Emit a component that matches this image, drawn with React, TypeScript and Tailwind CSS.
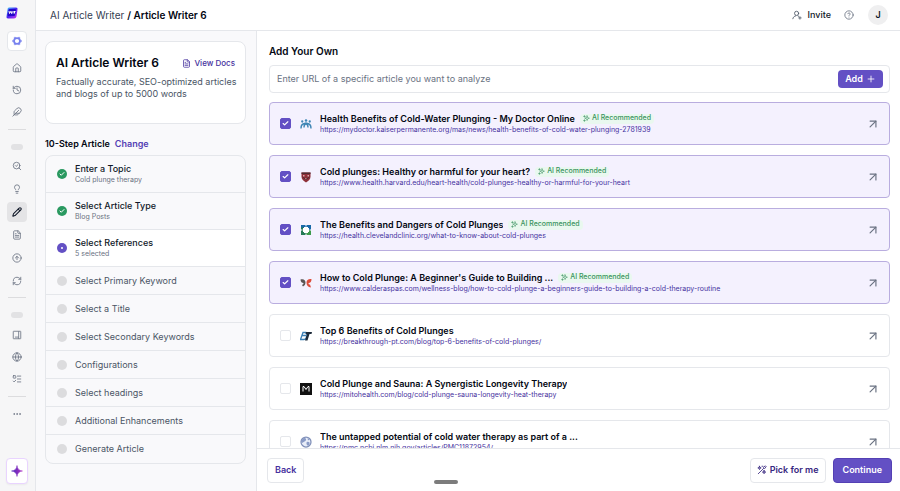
import React, { useState } from "react";
import {
  ArrowUpRight,
  Check,
  CircleHelp,
  Feather,
  FileText,
  Globe,
  History,
  House,
  Lightbulb,
  ListTodo,
  Ellipsis,
  Pencil,
  Plus,
  RefreshCw,
  CircleArrowUp,
  SearchCheck,
} from "lucide-react";
import clsx from "clsx";

interface Step {
  label: string;
  detail?: string;
  status: "done" | "active" | "todo";
}

const steps: Step[] = [
  { label: "Enter a Topic", detail: "Cold plunge therapy", status: "done" },
  { label: "Select Article Type", detail: "Blog Posts", status: "done" },
  { label: "Select References", detail: "5 selected", status: "active" },
  { label: "Select Primary Keyword", status: "todo" },
  { label: "Select a Title", status: "todo" },
  { label: "Select Secondary Keywords", status: "todo" },
  { label: "Configurations", status: "todo" },
  { label: "Select headings", status: "todo" },
  { label: "Additional Enhancements", status: "todo" },
  { label: "Generate Article", status: "todo" },
];

interface Reference {
  id: number;
  title: string;
  url: string;
  icon: string;
  recommended: boolean;
}

const references: Reference[] = [
  {
    id: 1,
    title: "Health Benefits of Cold-Water Plunging - My Doctor Online",
    url: "https://mydoctor.kaiserpermanente.org/mas/news/health-benefits-of-cold-water-plunging-2781939",
    icon: "kaiser",
    recommended: true,
  },
  {
    id: 2,
    title: "Cold plunges: Healthy or harmful for your heart?",
    url: "https://www.health.harvard.edu/heart-health/cold-plunges-healthy-or-harmful-for-your-heart",
    icon: "harvard",
    recommended: true,
  },
  {
    id: 3,
    title: "The Benefits and Dangers of Cold Plunges",
    url: "https://health.clevelandclinic.org/what-to-know-about-cold-plunges",
    icon: "cleveland",
    recommended: true,
  },
  {
    id: 4,
    title: "How to Cold Plunge: A Beginner's Guide to Building ...",
    url: "https://www.calderaspas.com/wellness-blog/how-to-cold-plunge-a-beginners-guide-to-building-a-cold-therapy-routine",
    icon: "caldera",
    recommended: true,
  },
  {
    id: 5,
    title: "Top 6 Benefits of Cold Plunges",
    url: "https://breakthrough-pt.com/blog/top-6-benefits-of-cold-plunges/",
    icon: "breakthrough",
    recommended: false,
  },
  {
    id: 6,
    title: "Cold Plunge and Sauna: A Synergistic Longevity Therapy",
    url: "https://mitohealth.com/blog/cold-plunge-sauna-longevity-heat-therapy",
    icon: "mito",
    recommended: false,
  },
  {
    id: 7,
    title: "The untapped potential of cold water therapy as part of a ...",
    url: "https://pmc.ncbi.nlm.nih.gov/articles/PMC11872954/",
    icon: "ncbi",
    recommended: false,
  },
];

const SiteIcon = ({ name }: { name: string }) => {
  switch (name) {
    case "kaiser":
      return (
        <svg viewBox="0 0 24 24" className="size-3">
          <g fill="#3f86b5">
            <circle cx="4.5" cy="7" r="2.3" />
            <circle cx="12" cy="5" r="2.5" />
            <circle cx="19.5" cy="7" r="2.3" />
          </g>
          <path d="M2 21c0-5 1-8 4-9l6-2 6 2c3 1 4 4 4 9M8 19c0-4 1-7 4-7s4 3 4 7" fill="none" stroke="#3f86b5" strokeWidth="2.8" />
        </svg>
      );
    case "harvard":
      return (
        <svg viewBox="0 0 24 24" className="size-3">
          <path d="M3 3h18v8c0 6-4 9-9 12-5-3-9-6-9-12z" fill="#8e2f38" />
          <path d="M3 3h18v3H3z" fill="#4f2b30" />
          <path d="M6 8h3v3H6zM15 8h3v3h-3zM10 14h3v3h-3z" fill="#d9a9aa" />
          <path d="m5 12 7 5 7-5" fill="none" stroke="#4f2b30" strokeWidth="2" />
        </svg>
      );
    case "cleveland":
      return (
        <svg viewBox="0 0 24 24" className="size-3">
          <path d="M2 2h10v20H2z" fill="#257b56" />
          <path d="M12 2h10v10H12z" fill="#1768a8" />
          <path d="M2 2h10v5H2z" fill="#1768a8" />
          <path d="M12 12h10v10H12z" fill="#3c9a4b" />
          <path d="M8 6h8v2h2v8h-2v2H8v-2H6V8h2z" fill="#fff" />
          <path d="M11 2h2v3h-2zM11 19h2v3h-2zM2 11h3v2H2zM19 11h3v2h-3z" fill="#fff" />
        </svg>
      );
    case "caldera":
      return (
        <svg viewBox="0 0 24 24" className="size-3">
          <path d="M1 5c6-2 10 1 10 6 0 4-2 6-5 8l-2-3c2-1 3-2 3-4-3 0-6-2-6-7z" fill="#5b5554" />
          <path d="M23 4c-6-1-10 2-10 7 0 6 3 9 9 10l-2-6c-2 0-3-1-3-3 4 0 6-3 6-8z" fill="#dd4d3a" />
        </svg>
      );
    case "breakthrough":
      return (
        <svg viewBox="0 0 24 24" className="size-3">
          <path d="M6 5h6c3 0 2 6-1 6 4 0 2 8-3 8H1zM4 11h7" fill="none" stroke="#3a7fb5" strokeWidth="2.6" />
          <path d="M12 4h12l-1 4h-4l-4 13h-5l4-13h-3z" fill="#1d2b3a" />
        </svg>
      );
    case "mito":
      return (
        <svg viewBox="0 0 24 24" className="size-3">
          <path d="M0 0h24v24H0z" fill="#111" />
          <path d="M6 17V7h2l4 6 4-6h2v10" fill="none" stroke="#fff" strokeWidth="2" />
        </svg>
      );
    default:
      return (
        <svg viewBox="0 0 24 24" className="size-3">
          <circle cx="12" cy="12" r="10" fill="#e8edf8" stroke="#7f8fb8" strokeWidth="2.5" />
          <path d="M6 5c4-2 7 0 6 3s-5 3-6 5-4-1-4-3zM14 12c4-1 6 1 5 4s-4 4-5 2-2-5 0-6zM15 4l4 3-3 2z" fill="#8a9bc6" />
        </svg>
      );
  }
};

const WandIcon = ({ className }: { className?: string }) => (
  <svg viewBox="0 0 24 24" className={className} fill="none" stroke="currentColor" strokeWidth="2" strokeLinecap="round" strokeLinejoin="round">
    <path d="m3 21 13-13M6 3l1 3 3 1-3 1-1 3-1-3-3-1 3-1zM12 3h2" />
    <path d="m15 6 5-4 2 2-4 5M17 13l1 3 3 1-3 1-1 3-1-3-3-1 3-1z" />
  </svg>
);

const SparkIcon = ({ className }: { className?: string }) => (
  <svg viewBox="0 0 24 24" className={className} fill="none" stroke="currentColor" strokeWidth="2" strokeLinecap="round" strokeLinejoin="round">
    <path d="m14 3 2 6 6 2-6 2-2 6-2-6-6-2 6-2zM5 2v5M2 5h6M5 16v6M2 19h6" />
  </svg>
);

const InviteIcon = () => (
  <svg viewBox="0 0 24 24" className="size-[10px] text-gray-600" fill="none" stroke="currentColor" strokeWidth="2" strokeLinecap="round" strokeLinejoin="round">
    <circle cx="11" cy="8" r="5" />
    <path d="M2 21c1-4 3-6 7-7M14 14l2 1M19 16v6M16 19h6" />
  </svg>
);

const PanelIcon = () => (
  <svg viewBox="0 0 24 24" className="size-[10px]" fill="none" stroke="currentColor" strokeWidth="2" strokeLinejoin="round">
    <rect x="3" y="3" width="18" height="18" rx="1" />
    <path d="M16 3v18M7 17h9" />
  </svg>
);

const navIcon = "size-[10px]";

const createItems = [
  { label: "Home", icon: <House className={navIcon} /> },
  { label: "History", icon: <History className={navIcon} /> },
  { label: "Writing", icon: <Feather className={navIcon} /> },
];

const toolItems = [
  { label: "Research", icon: <SearchCheck className={navIcon} /> },
  { label: "Ideas", icon: <Lightbulb className={navIcon} /> },
  { label: "Article writer", icon: <Pencil className={navIcon} strokeWidth={2.5} />, active: true },
  { label: "Documents", icon: <FileText className={navIcon} /> },
  { label: "Publish", icon: <CircleArrowUp className={navIcon} /> },
  { label: "Refresh", icon: <RefreshCw className={navIcon} /> },
];

const siteItems = [
  { label: "Library", icon: <PanelIcon /> },
  { label: "Sites", icon: <Globe className={navIcon} /> },
  { label: "Tasks", icon: <ListTodo className={navIcon} /> },
];

const NavButton = ({ label, icon, active }: { label: string; icon: React.ReactNode; active?: boolean }) => (
  <button
    aria-label={label}
    className={clsx(
      "flex size-5 items-center justify-center rounded",
      active ? "bg-[#e4e4e6] text-gray-900" : "text-gray-500"
    )}
  >
    {icon}
  </button>
);

const Divider = () => <div className="h-px w-[18px] shrink-0 bg-[#dcdcde]" />;
const Pill = () => <div className="h-[6px] w-3 shrink-0 rounded-full bg-[#e2e2e4]" />;

const Sidebar = () => (
  <nav className="flex w-9 shrink-0 flex-col items-center border-r border-gray-200 bg-[#f6f6f7] pt-[7px] pr-[2px] pb-[7px]">
    <svg viewBox="0 0 24 24" className="mr-[9px] size-3 shrink-0">
      <defs>
        <linearGradient id="brand" x1="0" y1="0" x2="1" y2="1">
          <stop offset="0" stopColor="#3fc5ff" />
          <stop offset="0.5" stopColor="#4a20f0" />
          <stop offset="1" stopColor="#d03cf0" />
        </linearGradient>
      </defs>
      <path d="M6 1h14q4 0 3 4l-2 14q-1 4-5 4H4q-4 0-3-4L3 5q0-4 3-4z" fill="url(#brand)" />
      <path d="M7 4h11q2 0 2 2l-2 10q0 2-2 2H5q-2 0-2-2L5 6q0-2 2-2z" fill="#2308c8" />
      <path d="m6 8 1 5 2-4 2 4 1-5M14 9v4M17 8v5M15 9h4" fill="none" stroke="#fff" strokeWidth="2" />
    </svg>
    <button aria-label="Workspace" className="mt-3 flex size-5 shrink-0 items-center justify-center rounded border border-gray-200 bg-white">
      <svg viewBox="0 0 24 24" className="size-[10px]">
        <g fill="#a3a9f3">
          <circle cx="7" cy="5" r="3" />
          <circle cx="17" cy="5" r="3" />
          <circle cx="3" cy="12" r="3" />
          <circle cx="21" cy="12" r="3" />
          <circle cx="7" cy="19" r="3" />
          <circle cx="17" cy="19" r="3" />
        </g>
        <circle cx="12" cy="12" r="7" fill="none" stroke="#7680ee" strokeWidth="4" />
      </svg>
    </button>
    <div className="mt-[7px] flex flex-col gap-[2px]">
      {createItems.map((item) => (
        <NavButton key={item.label} {...item} />
      ))}
    </div>
    <div className="mt-[7px] mb-[14px]"><Divider /></div>
    <Pill />
    <div className="mt-[6px] flex flex-col gap-[3px]">
      {toolItems.map((item) => (
        <NavButton key={item.label} {...item} />
      ))}
    </div>
    <div className="mt-[6px] mb-[14px]"><Divider /></div>
    <Pill />
    <div className="mt-[7px] flex flex-col gap-[2px]">
      {siteItems.map((item) => (
        <NavButton key={item.label} {...item} />
      ))}
    </div>
    <div className="my-[7px]"><Divider /></div>
    <NavButton label="More" icon={<Ellipsis className="size-[10px]" />} />
    <button aria-label="Assistant" className="mt-auto flex h-[26px] w-[22px] shrink-0 items-center justify-center rounded border border-purple-200 bg-white shadow-xs">
      <svg viewBox="0 0 24 24" className="size-3">
        <defs>
          <linearGradient id="spark" x1="0" y1="0" x2="1" y2="0">
            <stop offset="0" stopColor="#4b25b8" />
            <stop offset="1" stopColor="#b035c4" />
          </linearGradient>
        </defs>
        <path d="M12 1q1 10 11 11-10 1-11 11Q11 13 1 12 11 11 12 1z" fill="url(#spark)" stroke="url(#spark)" strokeWidth="1" />
      </svg>
    </button>
  </nav>
);

const Header = () => (
  <header className="flex h-[31px] shrink-0 items-center justify-between border-b border-gray-200 bg-white pr-3 pl-[14px]">
    <div className="text-[10px] text-gray-700">
      AI Article Writer <span className="font-semibold text-gray-950">/ Article Writer 6</span>
    </div>
    <div className="flex items-center">
      <button className="flex items-center gap-[6px] text-[9px] font-medium text-gray-900">
        <InviteIcon />
        Invite
      </button>
      <button aria-label="Help" className="ml-[13px] text-gray-500">
        <CircleHelp className="size-[10px]" />
      </button>
      <button className="ml-[14px] flex size-5 items-center justify-center rounded-full bg-[#efeff0] text-[9px] font-semibold text-gray-900">
        J
      </button>
    </div>
  </header>
);

const StepMarker = ({ status }: { status: Step["status"] }) => (
  <span
    className={clsx(
      "flex size-[10px] shrink-0 items-center justify-center rounded-full",
      status === "done" && "bg-[#2a9960]",
      status === "active" && "bg-[#6350c4]",
      status === "todo" && "bg-[#dcdcde]"
    )}
  >
    {status === "done" && <Check className="size-[6px] text-white" strokeWidth={4} />}
    {status === "active" && <span className="size-[2px] rounded-full bg-white" />}
  </span>
);

const StepsPanel = () => (
  <aside className="w-[221px] shrink-0 overflow-hidden border-r border-gray-200 bg-[#f9f9fb] pt-[10px] pr-[10px] pl-[9px]">
    <div className="h-[83px] rounded-lg border border-gray-200 bg-white px-[10px] pt-3">
      <div className="flex items-center justify-between">
        <h1 className="text-[12px] leading-[18px] font-semibold text-gray-950">AI Article Writer 6</h1>
        <a href="#docs" className="flex items-center gap-[3px] text-[8px] font-medium text-[#46319e]">
          <FileText className="size-[9px]" />
          View Docs
        </a>
      </div>
      <p className="-mr-2 mt-1 text-[9px] leading-3 text-gray-600">
        Factually accurate, SEO-optimized articles and blogs of up to 5000 words
      </p>
    </div>
    <div className="mt-[13px] flex h-[14px] items-center gap-[5px] text-[9px] font-semibold">
      <h2 className="text-gray-950">10-Step Article</h2>
      <button className="text-[#5440b4]">Change</button>
    </div>
    <ol className="mt-1 overflow-hidden rounded-lg border border-gray-200">
      {steps.map((step) => (
        <li
          key={step.label}
          className={clsx(
            "flex items-center gap-2 border-b border-gray-200 px-[11px] last:border-b-0",
            step.detail ? "h-[37px]" : "h-7",
            step.status === "active" && "bg-white"
          )}
        >
          <StepMarker status={step.status} />
          <div>
            <div className={clsx("text-[9px] leading-3", step.status === "todo" ? "text-gray-600" : "font-medium text-gray-900")}>
              {step.label}
            </div>
            {step.detail && <div className="text-[7px] leading-[10px] text-gray-500">{step.detail}</div>}
          </div>
        </li>
      ))}
    </ol>
  </aside>
);

interface ReferenceCardProps {
  item: Reference;
  checked: boolean;
  onToggle: (id: number) => void;
}

const ReferenceCard = ({ item, checked, onToggle }: ReferenceCardProps) => (
  <li
    className={clsx(
      "flex h-[43px] shrink-0 items-center rounded border pr-[9px] pl-[10px]",
      checked ? "border-[#b9addf] bg-[#f4f1fe]" : "border-gray-200 bg-white"
    )}
  >
    <span className="relative flex size-[11px] shrink-0">
      <input
        id={`ref-${item.id}`}
        type="checkbox"
        checked={checked}
        onChange={() => onToggle(item.id)}
        className="size-[11px] appearance-none rounded-[2px] border border-gray-200 bg-white checked:border-[#6350c4] checked:bg-[#6350c4]"
      />
      {checked && <Check className="pointer-events-none absolute inset-[2px] size-[7px] text-white" strokeWidth={4} />}
    </span>
    <span className="mr-2 ml-[9px] flex shrink-0">
      <SiteIcon name={item.icon} />
    </span>
    <div className="min-w-0 flex-1">
      <div className="flex items-center gap-[5px]">
        <label htmlFor={`ref-${item.id}`} className="truncate text-[9px] leading-3 font-semibold text-gray-950">
          {item.title}
        </label>
        {item.recommended && (
          <span className="flex h-[10px] shrink-0 items-center gap-[2px] rounded-sm bg-[#e9f8ef] px-[3px] text-[7px] font-medium text-[#3b9360]">
            <SparkIcon className="size-[7px]" />
            AI Recommended
          </span>
        )}
      </div>
      <a href={item.url} className="block truncate text-[7px] leading-[10px] text-[#46319e]">
        {item.url}
      </a>
    </div>
    <a href={item.url} aria-label={`Open ${item.title}`} className="text-gray-500">
      <ArrowUpRight className="size-[14px]" />
    </a>
  </li>
);

const App = () => {
  const [selected, setSelected] = useState<number[]>([1, 2, 3, 4]);
  const [url, setUrl] = useState("");

  const toggleReference = (id: number) => {
    setSelected((prev) => (prev.includes(id) ? prev.filter((x) => x !== id) : [...prev, id]));
  };

  return (
    <div className="relative flex h-screen overflow-hidden bg-white font-['Inter',sans-serif]">
      <Sidebar />
      <div className="flex min-w-0 flex-1 flex-col">
        <Header />
        <div className="flex min-h-0 flex-1">
          <StepsPanel />
          <main className="flex min-w-0 flex-1 flex-col">
            <div className="min-h-0 flex-1 overflow-hidden pt-3 pr-[10px] pl-3">
              <label htmlFor="article-url" className="block text-[10px] leading-4 font-semibold text-gray-950">
                Add Your Own
              </label>
              <form
                onSubmit={(e) => e.preventDefault()}
                className="mt-[6px] flex h-7 items-center rounded border border-gray-200 pr-[6px] pl-[7px]"
              >
                <input
                  id="article-url"
                  type="text"
                  value={url}
                  onChange={(e) => setUrl(e.target.value)}
                  placeholder="Enter URL of a specific article you want to analyze"
                  className="min-w-0 flex-1 text-[9px] text-gray-900 outline-none placeholder:text-gray-500"
                />
                <button type="submit" className="flex h-[18px] w-[45px] items-center justify-center gap-[3px] rounded bg-[#6350c4] text-[9px] font-semibold text-white">
                  Add
                  <Plus className="size-[10px]" />
                </button>
              </form>
              <ul className="mt-[9px] flex flex-col gap-[10px]">
                {references.map((item) => (
                  <ReferenceCard
                    key={item.id}
                    item={item}
                    checked={selected.includes(item.id)}
                    onToggle={toggleReference}
                  />
                ))}
              </ul>
            </div>
            <footer className="flex h-[43px] shrink-0 items-center justify-between border-t border-gray-200 pr-2 pl-[10px] text-[9px] font-semibold">
              <button className="h-[25px] rounded border border-gray-200 px-[7px] text-[#46319e]">Back</button>
              <div className="flex gap-[7px]">
                <button className="flex h-[25px] items-center gap-[3px] rounded border border-gray-200 px-[6px] text-[#37277f]">
                  <WandIcon className="size-[10px]" />
                  Pick for me
                </button>
                <button className="h-[25px] rounded border border-[#5440b4] bg-[#6350c4] px-[9px] text-white">Continue</button>
              </div>
            </footer>
          </main>
        </div>
      </div>
      <div className="absolute bottom-[7px] left-[434px] h-1 w-6 rounded-sm bg-[#7c7c7c]" />
    </div>
  );
};

export default App;
